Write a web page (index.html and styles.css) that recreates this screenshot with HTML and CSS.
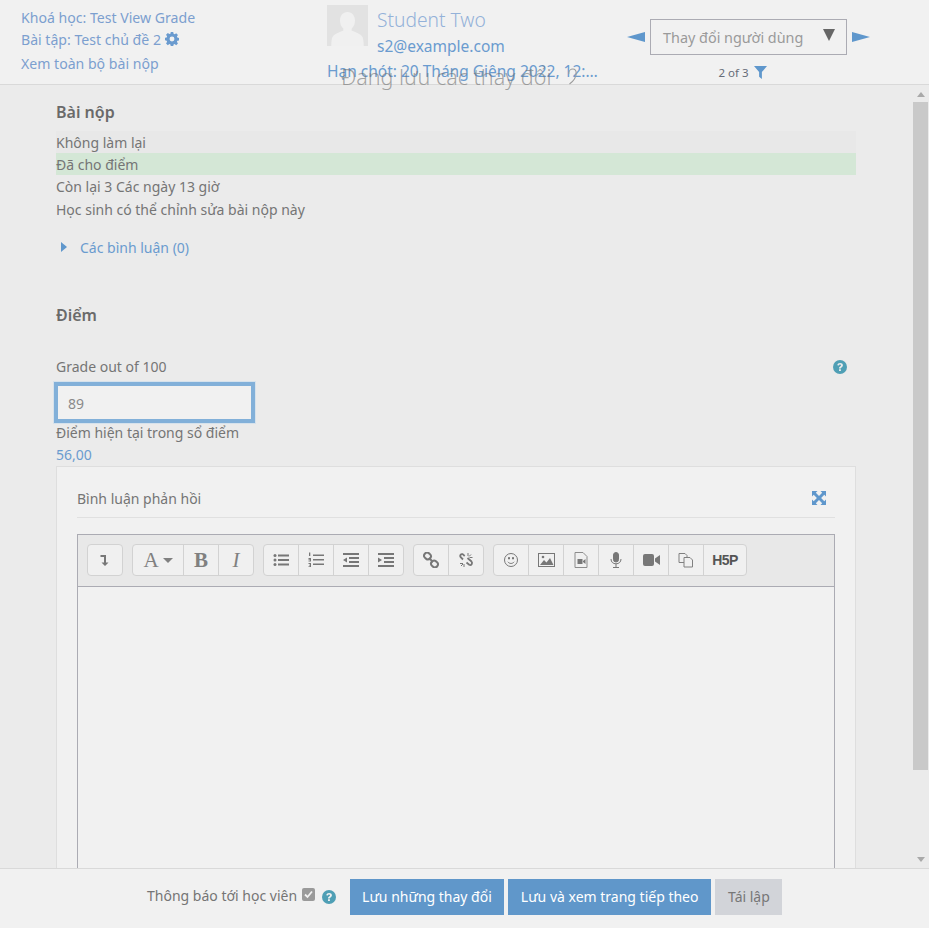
FILE: index.html
```html
<!DOCTYPE html>
<html lang="vi">
<head>
  <meta charset="UTF-8">
  <title>Test chủ đề 2 - Chấm điểm</title>
  <link rel="stylesheet" href="styles.css">
</head>
<body>

<header class="topbar">
  <div class="course-links">
    <a href="#">Khoá học: Test View Grade</a>
    <a href="#">Bài tập: Test chủ đề 2
      <svg class="cog" viewBox="0 0 16 16"><path fill-rule="evenodd" d="M6.6 0h2.8l.4 2.1 1.2.5 1.8-1.2 2 2-1.2 1.8.5 1.2 2.1.4v2.8l-2.1.4-.5 1.2 1.2 1.8-2 2-1.8-1.2-1.2.5-.4 2.1H6.6l-.4-2.1-1.2-.5-1.8 1.2-2-2 1.2-1.8-.5-1.2L-.2 9.4V6.6l2.1-.4.5-1.2L1.2 3.2l2-2L5 2.4l1.2-.5zM8 5.2a2.8 2.8 0 1 0 0 5.6 2.8 2.8 0 0 0 0-5.6z"/></svg>
    </a>
    <a href="#">Xem toàn bộ bài nộp</a>
  </div>

  <div class="student">
    <div class="student-top">
      <svg class="avatar" viewBox="0 0 41 41"><rect width="41" height="41" fill="#e2e2e2"/><path fill="#f0f0f0" d="M20.5 7c4.700 0 7.500 3.800 7.500 8.500 0 3.400-1.300 6.300-3.300 8v2.300c4.700 1.500 9.300 3.600 10.800 6.200.8 1.400 1.200 5 1.200 9H4.300c0-4 .4-7.600 1.200-9 1.500-2.600 6.100-4.700 10.800-6.200v-2.300c-2-1.700-3.300-4.600-3.300-8C13 10.800 15.800 7 20.500 7z"/></svg>
      <div class="student-info">
        <a class="student-name" href="#">Student Two</a>
        <a class="student-mail" href="#">s2@example.com</a>
      </div>
    </div>
    <div class="due-date">Hạn chót: 20 Tháng Giêng 2022, 12:00 SA</div>
  </div>

  <div class="user-nav">
    <div class="user-select-row">
      <svg class="nav-arrow" viewBox="0 0 18 10"><path d="M0 5 18 0v10z"/></svg>
      <div class="user-select">
        <span>Thay đổi người dùng</span>
        <svg class="caret" viewBox="0 0 12 12"><path d="M0 0h12L6 12z"/></svg>
      </div>
      <svg class="nav-arrow" viewBox="0 0 18 10"><path d="M18 5 0 0v10z"/></svg>
    </div>
    <div class="user-count">2 of 3
      <svg class="filter" viewBox="0 0 14 14"><path d="M0 0h14L8.500 6.500V14L5.500 11.500v-5z"/></svg>
    </div>
  </div>
</header>

<div class="saving">Đang lưu các thay đổi
  <svg class="spinner" viewBox="0 0 12 20"><path d="M2 7c0-4 2.500-6 5-6s4 2 4 5c0 6-4 10-8 13" fill="none" stroke="#9b9b9b" stroke-width="1.300"/></svg>
</div>

<div class="middle">
  <main class="content">
    <h3 class="section-title first">Bài nộp</h3>
    <div class="status-row">Không làm lại</div>
    <div class="status-row graded">Đã cho điểm</div>
    <div class="status-row plain">Còn lại 3 Các ngày 13 giờ</div>
    <div class="status-row plain last">Học sinh có thể chỉnh sửa bài nộp này</div>

    <a class="comments" href="#"><span class="comments-arrow"></span>Các bình luận (0)</a>

    <h3 class="section-title">Điểm</h3>

    <div class="grade-label">
      <span>Grade out of 100</span>
      <svg class="help" viewBox="0 0 14 14"><circle cx="7" cy="7" r="7"/><path d="M4.300 5.300C4.500 3.700 5.600 3 7.100 3c1.600 0 2.800.9 2.800 2.300 0 1.100-.6 1.600-1.400 2.100-.5.300-.7.500-.7 1H6c0-1 .3-1.500 1.100-2 .6-.4 1-.6 1-1.100 0-.5-.4-.8-1-.8-.7 0-1 .4-1.100 1zM6 9.300h1.900V11H6z" fill="#ebebeb"/></svg>
    </div>
    <input class="grade-input" type="text" value="89">
    <div class="current-label">Điểm hiện tại trong sổ điểm</div>
    <a class="current-value" href="#">56,00</a>

    <section class="feedback">
      <div class="feedback-head">
        <span>Bình luận phản hồi</span>
        <svg class="expand" viewBox="0 0 14 14"><path d="M0 0h5.500L3.800 1.700 7 4.900l3.200-3.200L8.500 0H14v5.500l-1.700-1.700L9.100 7l3.200 3.200L14 8.500V14H8.500l1.700-1.700L7 9.100l-3.200 3.200L5.500 14H0V8.500l1.700 1.700L4.900 7 1.700 3.800 0 5.500z"/></svg>
      </div>

      <div class="editor">
        <div class="toolbar">
          <div class="tool-group">
            <button class="tool"><svg viewBox="0 0 16 16"><path d="M3.500 3h5.500v7.500h2.500L8 14l-3.500-3.500H7V5H3.500z" fill="#777"/></svg></button>
          </div>
          <div class="tool-group">
            <button class="tool wide"><span class="letter">A</span><span class="mini-caret"></span></button>
            <button class="tool"><span class="letter bold">B</span></button>
            <button class="tool"><span class="letter italic">I</span></button>
          </div>
          <div class="tool-group">
            <button class="tool"><svg viewBox="0 0 16 16" fill="#777"><circle cx="2" cy="3.500" r="1.500"/><circle cx="2" cy="8" r="1.500"/><circle cx="2" cy="12.500" r="1.500"/><path d="M5 2.500h11v2H5zM5 7h11v2H5zM5 11.500h11v2H5z"/></svg></button>
            <button class="tool"><svg viewBox="0 0 16 16" fill="#777"><path d="M5 2.500h11v1.600H5zM5 7h11v1.600H5zM5 11.500h11v1.600H5zM1 .5h1.300v3.500H1zM.5 6h2.500v3.500H.5v-1h1.500v-.7H.5zM.5 11h2.500v4H.5v-.8h1.500v-.8H1v-.7h1v-.8H.5z"/></svg></button>
            <button class="tool"><svg viewBox="0 0 16 16" fill="#777"><path d="M0 1h16v2H0zM6 5h10v2H6zM6 9h10v2H6zM0 13h16v2H0zM4 5.500v5L0 8z"/></svg></button>
            <button class="tool"><svg viewBox="0 0 16 16" fill="#777"><path d="M0 1h16v2H0zM6 5h10v2H6zM6 9h10v2H6zM0 13h16v2H0zM0 5.500v5L4 8z"/></svg></button>
          </div>
          <div class="tool-group">
            <button class="tool"><svg viewBox="0 0 16 16" fill="none" stroke="#777" stroke-width="2"><rect x="1" y="1" width="7" height="6" rx="3" transform="rotate(40 4.500 4)"/><rect x="8" y="9" width="7" height="6" rx="3" transform="rotate(40 11.500 12)"/><path d="M6 6l4 4"/></svg></button>
            <button class="tool"><svg viewBox="0 0 16 16" fill="none" stroke="#777" stroke-width="1.800"><path d="M5 7.500 2.500 5c-1-1.300.4-3.500 2.200-2.800l2 1.800M9.500 6l4 3.500c1.400 1.500-.2 4.500-2.300 3.300l-2.700-2.300"/><path stroke-width="1" d="M10 1v3M13 2.500l-2 2M14.500 5.500h-3M2 11.500h3M3 14l2-2M6 15v-3"/></svg></button>
          </div>
          <div class="tool-group">
            <button class="tool"><svg viewBox="0 0 16 16" fill="none" stroke="#777" stroke-width="1"><circle cx="8" cy="8" r="6.500"/><path d="M4.800 9.800c1.700 2.200 4.700 2.200 6.400 0"/><path fill="#777" d="M5.500 5.500h1v1.500h-1zM9.500 5.500h1v1.500h-1z"/></svg></button>
            <button class="tool"><svg class="wide-icon" viewBox="0 0 17 14"><rect x=".5" y=".5" width="16" height="13" fill="none" stroke="#777"/><path fill="#777" d="M2 12 6 7l2.500 2.500L12 5l3.500 7z"/><circle cx="5" cy="4" r="1.300" fill="#777"/></svg></button>
            <button class="tool"><svg viewBox="0 0 14 16"><path fill="none" stroke="#8c8c8c" d="M1 .5h8l4 4v11H1z"/><path fill="#777" d="M3.500 7h5v5h-5zM9 9l2.500-2v5L9 10z"/></svg></button>
            <button class="tool"><svg viewBox="0 0 12 16" fill="none" stroke="#777"><rect x="3.500" y=".5" width="5" height="9.500" rx="2.500" fill="#777"/><path d="M1 7c0 3 2 4.800 5 4.800S11 10 11 7M6 12v3M3 15.500h6"/></svg></button>
            <button class="tool"><svg class="wide-icon" viewBox="0 0 17 12"><rect y="0" width="11" height="12" rx="2" fill="#777"/><path fill="#777" d="m12 4.500 5-3.500v10l-5-3.500z"/></svg></button>
            <button class="tool"><svg viewBox="0 0 16 16" fill="#f0f0f0" stroke="#808080"><path d="M1 1.500h6l2 2v7H1z"/><path d="M6 5.500h6l2.500 2.500v7H6z"/></svg></button>
            <button class="tool h5p"><span>H5P</span></button>
          </div>
        </div>
        <div class="editor-area"></div>
      </div>
    </section>
  </main>

  <div class="scrollbar">
    <span class="scroll-up"></span>
    <div class="scroll-thumb"></div>
    <span class="scroll-down"></span>
  </div>
</div>

<footer class="actions">
  <span class="notify">Thông báo tới học viên</span>
  <span class="checkbox">
    <svg viewBox="0 0 13 13"><path d="M3 6.500 5.500 9 10 3.500" fill="none" stroke="#f1f1f1" stroke-width="1.800"/></svg>
  </span>
  <svg class="help footer-help" viewBox="0 0 14 14"><circle cx="7" cy="7" r="7"/><path d="M4.300 5.300C4.500 3.700 5.600 3 7.100 3c1.600 0 2.800.9 2.800 2.300 0 1.100-.6 1.600-1.400 2.100-.5.300-.7.500-.7 1H6c0-1 .3-1.500 1.100-2 .6-.4 1-.6 1-1.100 0-.5-.4-.8-1-.8-.7 0-1 .4-1.100 1zM6 9.300h1.900V11H6z" fill="#f1f1f1"/></svg>
  <button class="btn btn-primary save">Lưu những thay đổi</button>
  <button class="btn btn-primary">Lưu và xem trang tiếp theo</button>
  <button class="btn btn-reset">Tái lập</button>
</footer>

</body>
</html>
```

FILE: styles.css
```css
* {
  box-sizing: border-box;
}

html,
body {
  height: 100%;
}

body {
  margin: 0;
  display: flex;
  flex-direction: column;
  height: 928px;
  overflow: hidden;
  position: relative;
  font-family: "Noto Sans", "Open Sans", sans-serif;
  font-size: 14px;
  color: #757575;
  background: #ebebeb;
}

a {
  color: #6a9bcf;
  text-decoration: none;
}

/* top bar */
.topbar {
  flex: 0 0 85px;
  display: flex;
  background: #f1f1f1;
  border-bottom: 1px solid #d9d9d9;
}

.course-links {
  width: 327px;
  padding: 7px 0 0 21px;
  display: flex;
  flex-direction: column;
}

.course-links a {
  font-size: 14.100px;
  line-height: 22px;
  color: #7c9fcf;
}

.course-links a:last-child {
  margin-top: 2px;
}

.cog {
  width: 14px;
  height: 14px;
  fill: #6a9bcf;
  vertical-align: -1px;
}

.student {
  width: 271px;
  padding-top: 5px;
}

.student-top {
  display: flex;
  gap: 9px;
}

.avatar {
  width: 41px;
  height: 41px;
}

.student-info {
  display: flex;
  flex-direction: column;
}

.student-name {
  font-size: 19.200px;
  line-height: 30px;
  font-weight: 300;
  color: #94b2d9;
}

.student-mail {
  font-size: 15.500px;
  line-height: 22px;
}

.due-date {
  font-size: 15.500px;
  line-height: 22px;
  margin-top: 3px;
  color: #6a9bcf;
  white-space: nowrap;
  overflow: hidden;
  text-overflow: ellipsis;
}

.user-nav {
  margin-left: 29px;
  padding-top: 19px;
  display: flex;
  flex-direction: column;
  align-items: center;
  width: 243px;
}

.user-select-row {
  display: flex;
  align-items: center;
  gap: 5px;
}

.nav-arrow {
  width: 18px;
  height: 10px;
  fill: #5f97cc;
}

.user-select {
  width: 197px;
  height: 36px;
  padding: 0 11px 0 12px;
  border: 1px solid #ababb3;
  display: flex;
  justify-content: space-between;
  font-size: 14.400px;
  line-height: 36px;
  color: #9a9a9a;
}

.caret {
  width: 12px;
  height: 12px;
  margin-top: 9px;
  fill: #666;
}

.user-count {
  margin: 10px 12px 0 0;
  font-size: 11.500px;
  line-height: 16px;
  color: #666c78;
}

.filter {
  width: 13px;
  height: 13px;
  margin-left: 2px;
  vertical-align: -2px;
  fill: #5f97cc;
}

/* saving message lying over the header */
.saving {
  position: absolute;
  top: 63px;
  left: 341px;
  font-size: 21.500px;
  line-height: 28px;
  font-weight: 300;
  color: rgba(110, 110, 110, 0.6);
  white-space: nowrap;
}

.spinner {
  width: 10px;
  height: 17px;
  margin-left: 10px;
}

/* middle */
.middle {
  flex: 1;
  display: flex;
  min-height: 0;
}

.content {
  flex: 1;
  min-width: 0;
  overflow: hidden;
  padding: 0 56px;
}

.section-title {
  margin: 45px 0 0;
  font-size: 16px;
  line-height: 24px;
  font-weight: 600;
  color: #6a6a6a;
}

.section-title.first {
  margin: 15px 0 7px;
}

.status-row {
  height: 22px;
  padding-top: 1px;
  line-height: 22px;
  background: #e8e8e8;
}

.status-row.graded {
  background: #d4e7d6;
}

.status-row.plain {
  padding-top: 0;
  margin-top: 1px;
  background: none;
}

.status-row.last {
  margin-bottom: 15px;
}

.comments {
  display: flex;
  align-items: center;
  height: 22px;
  padding-left: 5px;
}

.comments-arrow {
  width: 0;
  height: 0;
  margin-right: 13px;
  border-left: 6px solid #5f97cc;
  border-top: 5px solid transparent;
  border-bottom: 5px solid transparent;
}

.grade-label {
  margin-top: 29px;
  height: 22px;
  line-height: 22px;
  display: flex;
  justify-content: space-between;
  align-items: center;
  padding-right: 9px;
}

.help {
  width: 14px;
  height: 14px;
  fill: #4f9fb5;
}

.grade-input {
  display: block;
  width: 201px;
  height: 41px;
  margin: 4px 0 0 -2px;
  padding: 2px 10px 0;
  background: #f1f1f1;
  border: 4px solid #82b0d9;
  box-shadow: 0 0 0 1px #d6e2ec;
  font: inherit;
  color: #8a8a8a;
  outline: none;
}

.current-label {
  height: 22px;
  margin-top: -1px;
  line-height: 22px;
}

.current-value {
  display: block;
  height: 22px;
  line-height: 22px;
}

/* feedback card */
.feedback {
  padding: 16px 20px 0;
  background: #f1f1f1;
  border: 1px solid #dedede;
}

.feedback-head {
  height: 35px;
  display: flex;
  justify-content: space-between;
  align-items: center;
  padding: 0 9px 4px 0;
  border-bottom: 1px solid #e0e0e0;
}

.expand {
  width: 14px;
  height: 14px;
  fill: #5f97cc;
}

.editor {
  margin-top: 16px;
  border: 1px solid #ababb3;
}

.toolbar {
  height: 52px;
  padding: 9px;
  display: flex;
  gap: 9px;
  background: #e8e8e8;
  border-bottom: 1px solid #ababb3;
}

.tool-group {
  display: flex;
  height: 32px;
  background: #f0f0f0;
  border: 1px solid #d2d2d2;
  border-radius: 4px;
}

.tool {
  width: 35px;
  padding: 0;
  display: flex;
  justify-content: center;
  align-items: center;
  background: none;
  border: 0;
  border-right: 1px solid #d2d2d2;
  font-family: "Liberation Serif", serif;
  color: #808080;
}

.tool:last-child {
  width: 34px;
  border-right: 0;
}

.tool svg {
  width: 16px;
  height: 16px;
}

.tool svg.wide-icon {
  width: 17px;
}

.tool.wide {
  width: 51px;
  gap: 4px;
}

.letter {
  font-size: 21px;
  line-height: 20px;
}

.letter.bold {
  font-weight: 700;
}

.letter.italic {
  font-style: italic;
}

.mini-caret {
  width: 0;
  height: 0;
  border-top: 5px solid #808080;
  border-left: 5px solid transparent;
  border-right: 5px solid transparent;
}

.tool.h5p {
  width: 42px;
  font-family: "Liberation Sans", sans-serif;
  font-size: 14px;
  font-weight: 700;
  letter-spacing: -0.5px;
  color: #555;
}

.editor-area {
  height: 400px;
  background: #f1f1f1;
}

/* fake scrollbar */
.scrollbar {
  flex: 0 0 17px;
  display: flex;
  flex-direction: column;
  align-items: center;
  padding: 7px 0 6px;
}

.scroll-up,
.scroll-down {
  width: 0;
  height: 0;
  border-left: 4px solid transparent;
  border-right: 4px solid transparent;
}

.scroll-up {
  border-bottom: 5px solid #a9a9a9;
}

.scroll-down {
  border-top: 5px solid #a9a9a9;
}

.scroll-thumb {
  width: 15px;
  height: 668px;
  margin: 5px 0 auto;
  background: #c9c9c9;
}

/* bottom actions */
.actions {
  flex: 0 0 60px;
  display: flex;
  align-items: center;
  padding: 0 0 4px 147px;
  background: #f1f1f1;
  border-top: 1px solid #d9d9d9;
}

.notify {
  line-height: 22px;
  margin-top: -2px;
}

.checkbox {
  width: 13px;
  height: 13px;
  margin: -4px 0 0 5px;
  background: #9a9a9a;
  border-radius: 2px;
  display: flex;
}

.footer-help {
  margin: 0 14px 0 7px;
}

.btn {
  height: 36px;
  padding: 0 13px;
  margin-right: 4px;
  border: 0;
  font: inherit;
}

.btn-primary {
  background: #6097ca;
  color: #fff;
}

.btn-primary.save {
  padding: 0 12px;
}

.btn-reset {
  padding: 0 12.500px;
  background: #d2d4d9;
  color: #777;
}
```
